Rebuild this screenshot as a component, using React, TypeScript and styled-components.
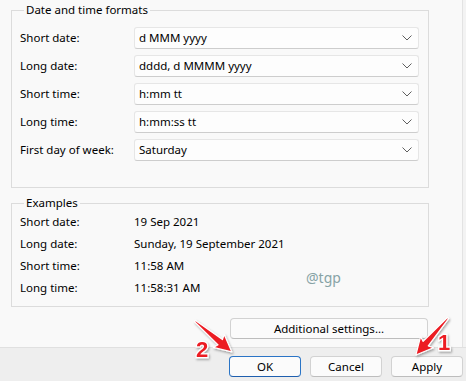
import React from "react";
import styled, { createGlobalStyle } from "styled-components";

const GlobalStyle = createGlobalStyle`
    html, body {
        margin: 0;
        padding: 0;
        background: #f9f9f9;
    }
    body {
        font-family: "Noto Sans", "Open Sans", sans-serif;
        font-size: 11px;
        color: #000;
    }
`;

const Frame = styled.div`
    position: relative;
    width: 466px;
    height: 381px;
    display: flex;
    flex-direction: column;
    overflow: hidden;
`;
const Body = styled.div`
    flex: 1;
    display: flex;
`;
const Content = styled.div`
    width: 462px;
    box-sizing: border-box;
    padding: 3px 0 0 11px;
    display: flex;
    flex-direction: column;
`;
const Edge = styled.div`
    flex: 1;
    border-left: 1px solid #e3e3e3;
    background: #f3f3f3;
`;
const Group = styled.fieldset<{ $pad: string }>`
    position: relative;
    width: 418px;
    box-sizing: border-box;
    margin: 0;
    padding: ${props => props.$pad};
    border: 1px solid #dcdcdc;
    border-radius: 0;
`;
const Legend = styled.legend`
    margin-left: 4px;
    padding: 0 2px;
    line-height: 14px;
    font-size: 11.5px;
`;
const FormatList = styled.div`
    display: flex;
    flex-direction: column;
    gap: 6px;
`;
const FormatRow = styled.div`
    display: grid;
    grid-template-columns: 114px 285px;
    align-items: center;
`;
const Label = styled.span`
    font-size: 11.5px;
    line-height: 14px;
    white-space: nowrap;
`;
const Combo = styled.div`
    height: 22px;
    box-sizing: border-box;
    display: flex;
    align-items: center;
    justify-content: space-between;
    padding: 0 6px 0 4px;
    background: #fdfdfd;
    border: 1px solid #e6e6e6;
    border-bottom-color: #cdcdcd;
    border-radius: 3px;
`;
const ExampleRow = styled.div`
    display: grid;
    grid-template-columns: 114px 1fr;
    align-items: center;
    height: 22px;
    box-sizing: border-box;
    padding-top: 1px;
`;
const Watermark = styled.span`
    position: absolute;
    left: 294px;
    top: 58px;
    font-size: 14px;
    color: #87a3a6;
`;
const SettingsRow = styled.div`
    display: flex;
    justify-content: flex-end;
    width: 417px;
    margin-top: 11px;
`;
const Button = styled.button<{ $width: number; $primary?: boolean }>`
    width: ${props => props.$width}px;
    height: 21px;
    box-sizing: border-box;
    padding: 0;
    font-family: inherit;
    font-size: 11.5px;
    color: #000;
    background: #fbfbfb;
    border: 1px solid ${props => (props.$primary ? "#2a74c6" : "#d2d2d2")};
    border-bottom-color: ${props => (props.$primary ? "#1f5fae" : "#bdbdbd")};
    border-radius: 4px;
`;
const Footer = styled.div`
    height: 34px;
    box-sizing: border-box;
    border-top: 1px solid #e0e0e0;
    background: #eeeeee;
    display: flex;
    justify-content: flex-end;
    gap: 9px;
    padding: 8px 3px 0 0;
`;
const Overlay = styled.svg`
    position: absolute;
    left: 0;
    top: 0;
    pointer-events: none;
    overflow: visible;
`;

const formats = [
    ["Short date:", "d MMM yyyy"],
    ["Long date:", "dddd, d MMMM yyyy"],
    ["Short time:", "h:mm tt"],
    ["Long time:", "h:mm:ss tt"],
    ["First day of week:", "Saturday"],
];

const examples = [
    ["Short date:", "19 Sep 2021"],
    ["Long date:", "Sunday, 19 September 2021"],
    ["Short time:", "11:58 AM"],
    ["Long time:", "11:58:31 AM"],
];

const Chevron = () => (
    <svg width="10" height="6" viewBox="0 0 10 6">
        <path d="M0.5 0.5 L5 5 L9.5 0.5" fill="none" stroke="#5f5f5f" strokeWidth="1" />
    </svg>
);

// tapered arrow pointing along +x, tail at the origin
const arrowShape = (len: number) =>
    `0,-0.8 ${len - 15},-3.4 ${len - 17},-8.5 ${len},0 ${len - 17},8.5 ${len - 15},3.4 0,0.8`;

const Arrows = () => (
    <Overlay width="466" height="381">
        <defs>
            <filter id="sh" x="-20%" y="-20%" width="140%" height="140%">
                <feDropShadow dx="1" dy="1.5" stdDeviation="0.8" floodColor="#000" floodOpacity="0.35" />
            </filter>
        </defs>
        <g filter="url(#sh)">
            <polygon
                points={arrowShape(48)}
                transform="translate(195 321) rotate(40)"
                fill="#ec1c24"
                stroke="#fff"
                strokeWidth="1.2"
                strokeLinejoin="round"
            />
            <polygon
                points={arrowShape(49)}
                transform="translate(448 318) rotate(131)"
                fill="#ec1c24"
                stroke="#fff"
                strokeWidth="1.2"
                strokeLinejoin="round"
            />
            <text
                x="196"
                y="357"
                fontFamily="'Liberation Sans', Arial, sans-serif"
                fontWeight="bold"
                fontSize="22"
                fill="#ec1c24"
                stroke="#fff"
                strokeWidth="2.5"
                paintOrder="stroke"
            >
                2
            </text>
            <text
                x="438"
                y="350"
                fontFamily="'Liberation Sans', Arial, sans-serif"
                fontWeight="bold"
                fontSize="22"
                fill="#ec1c24"
                stroke="#fff"
                strokeWidth="2.5"
                paintOrder="stroke"
            >
                1
            </text>
        </g>
    </Overlay>
);

const App: React.FC = () => {
    return (
        <>
            <GlobalStyle />
            <Frame>
                <Body>
                    <Content>
                        <Group $pad="10px 9px 26px 8px">
                            <Legend>Date and time formats</Legend>
                            <FormatList>
                                {formats.map(([label, value]) => (
                                    <FormatRow key={label}>
                                        <Label>{label}</Label>
                                        <Combo>
                                            <Label>{value}</Label>
                                            <Chevron />
                                        </Combo>
                                    </FormatRow>
                                ))}
                            </FormatList>
                        </Group>
                        <Group $pad="0 9px 8px 8px" style={{ marginTop: 8 }}>
                            <Legend>Examples</Legend>
                            {examples.map(([label, value]) => (
                                <ExampleRow key={label}>
                                    <Label>{label}</Label>
                                    <Label>{value}</Label>
                                </ExampleRow>
                            ))}
                            <Watermark>@tgp</Watermark>
                        </Group>
                        <SettingsRow>
                            <Button $width={198}>Additional settings...</Button>
                        </SettingsRow>
                    </Content>
                    <Edge />
                </Body>
                <Footer>
                    <Button $width={72} $primary>
                        OK
                    </Button>
                    <Button $width={72}>Cancel</Button>
                    <Button $width={72}>Apply</Button>
                </Footer>
                <Arrows />
            </Frame>
        </>
    );
};

export default App;
